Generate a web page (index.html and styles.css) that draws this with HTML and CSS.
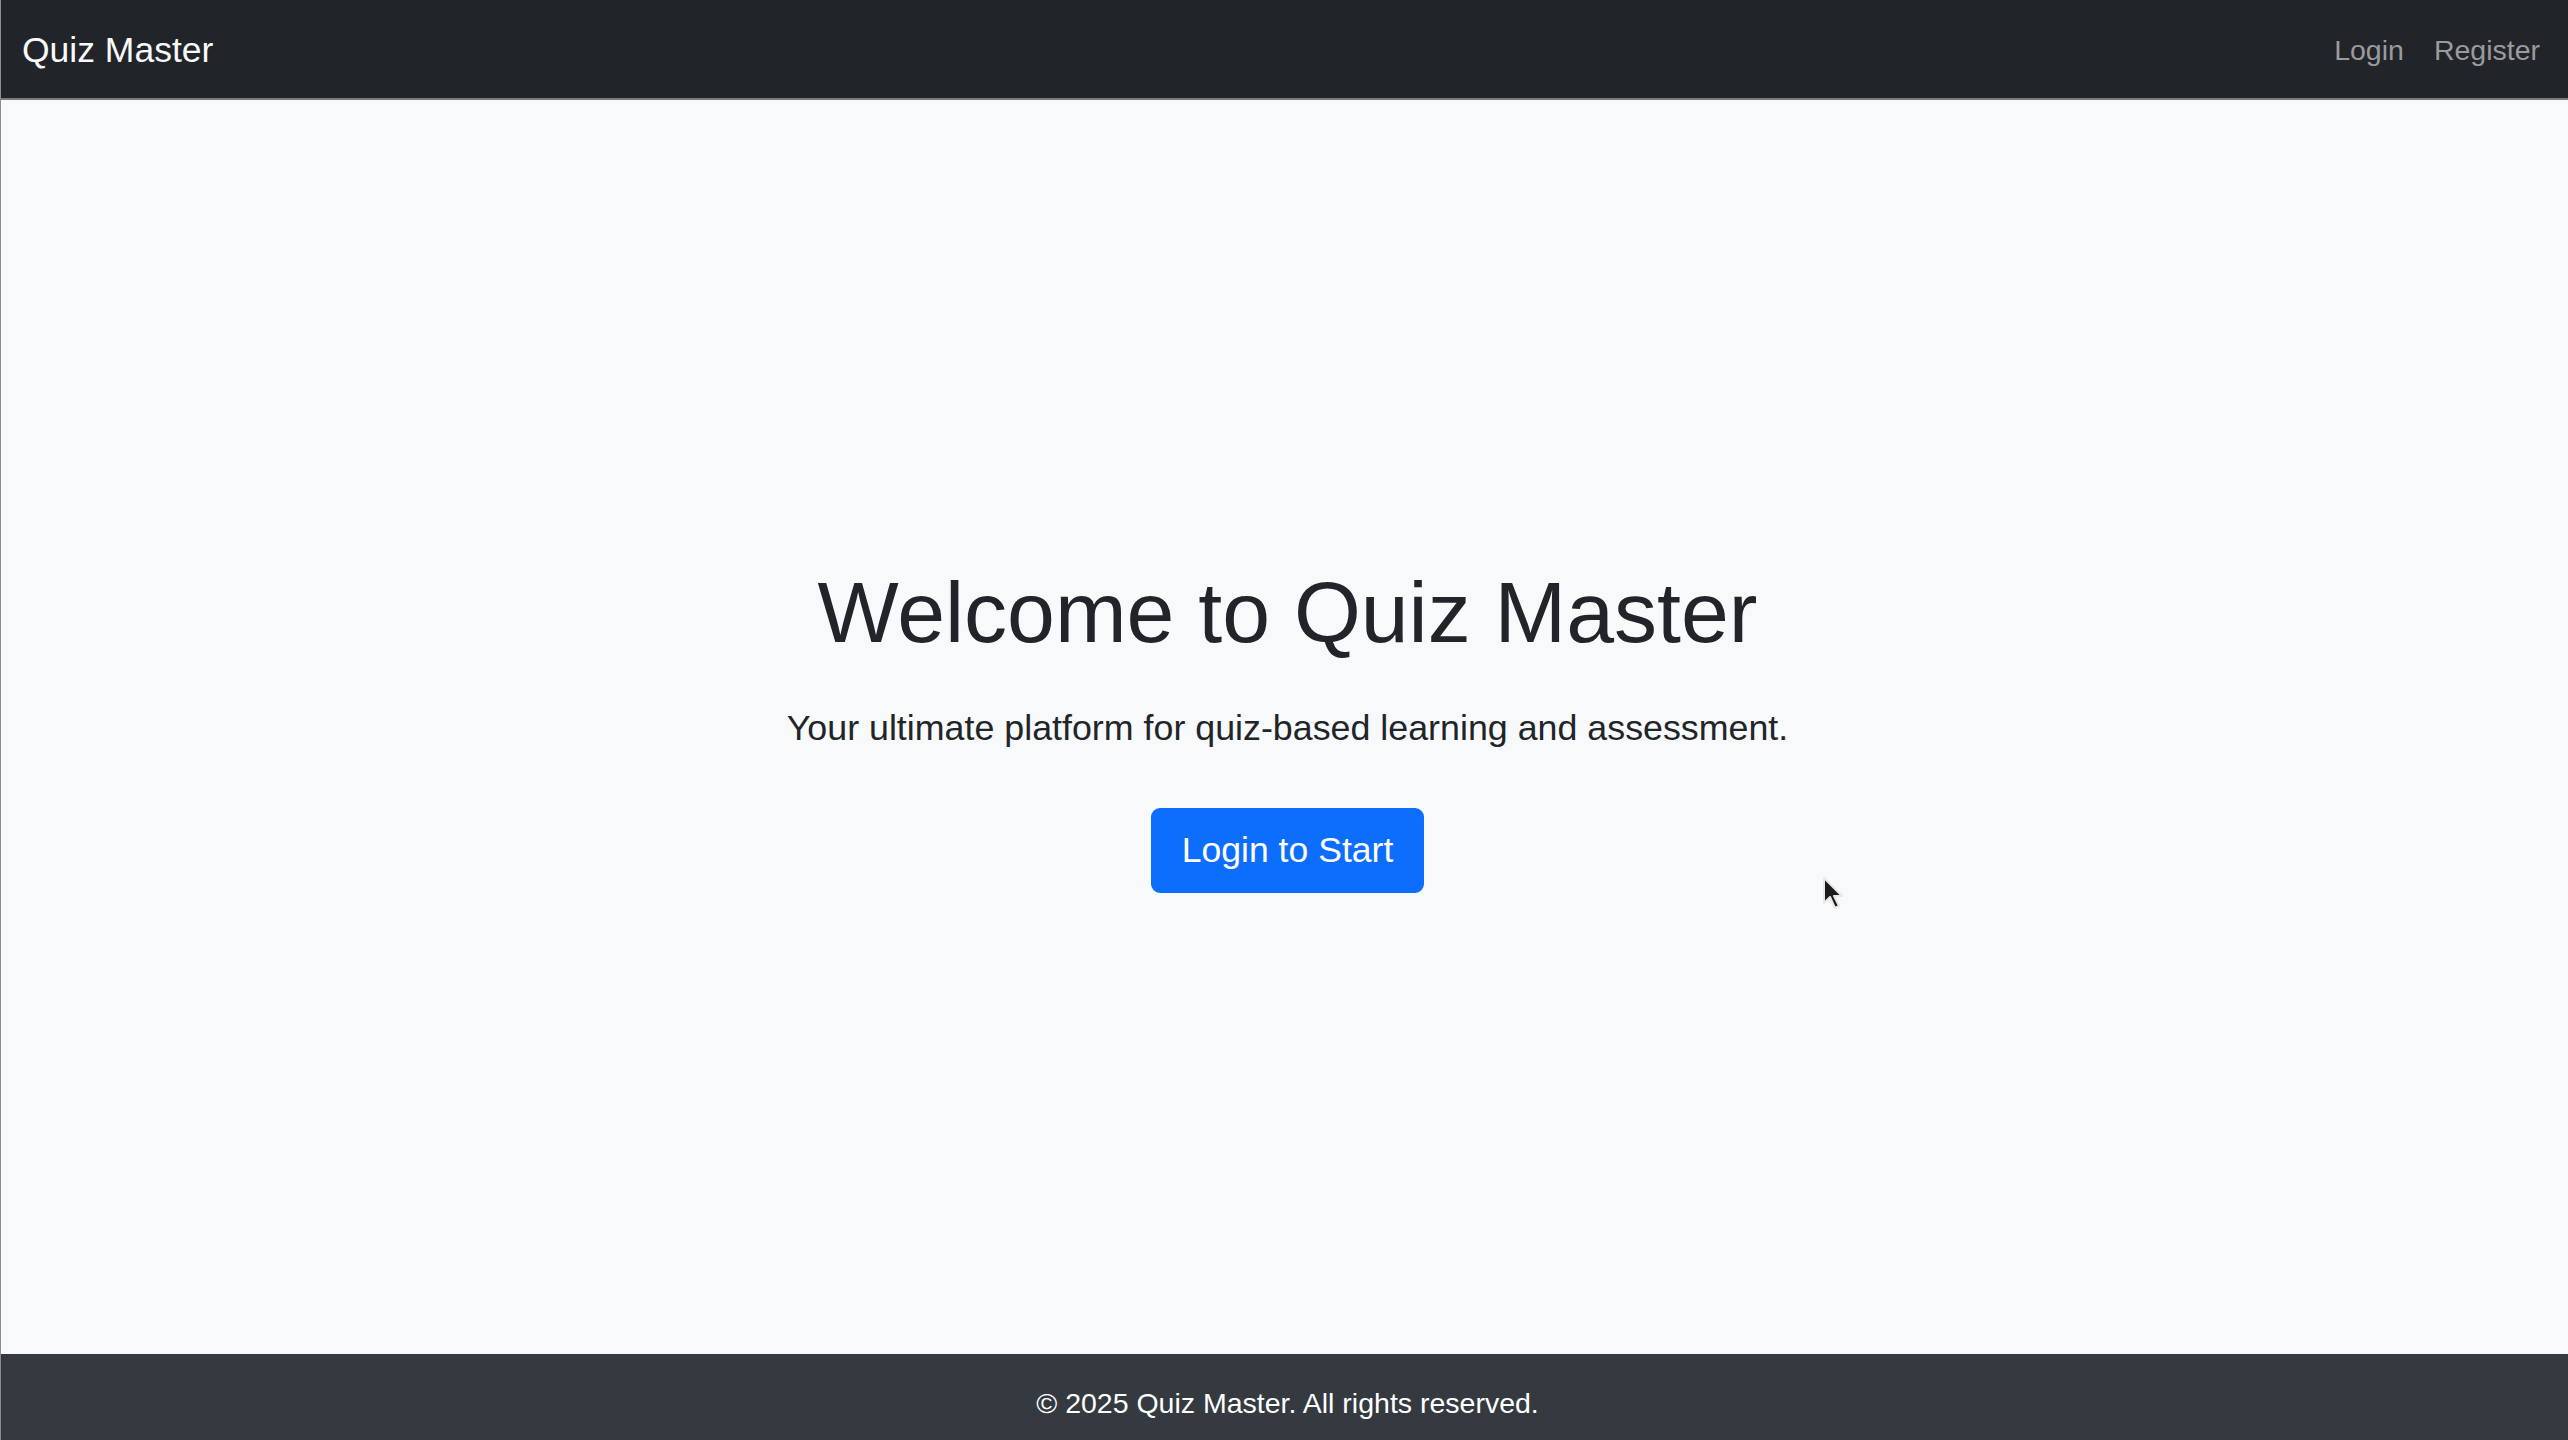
FILE: index.html
```html
<!DOCTYPE html>
<html lang="en">
<head>
<meta charset="utf-8">
<title>Quiz Master</title>
<link rel="stylesheet" href="styles.css">
</head>
<body>
<div class="page">
  <nav class="navbar">
    <a class="brand" href="#">Quiz Master</a>
    <div class="nav-links">
      <a class="nav-link" href="#">Login</a>
      <a class="nav-link" href="#">Register</a>
    </div>
  </nav>
  <main class="main">
    <div class="hero">
      <h1 class="hero-title">Welcome to Quiz Master</h1>
      <p class="hero-lead">Your ultimate platform for quiz-based learning and assessment.</p>
      <a class="btn-primary" href="#">Login to Start</a>
    </div>
  </main>
  <footer class="footer">
    <p class="footer-text">© 2025 Quiz Master. All rights reserved.</p>
  </footer>
  <svg class="cursor" width="22" height="34" viewBox="0 0 22 34">
    <path d="M2 2 L2 27 L8 21 L13 32 L17 30 L12 20 L20 20 Z" fill="#1b1b1b" stroke="#e8e8e8" stroke-width="2" stroke-linejoin="round"/>
  </svg>
</div>
</body>
</html>
```
FILE: styles.css
```css
* { box-sizing: border-box; }
html, body { margin: 0; padding: 0; }
body {
  font-family: "Liberation Sans", Arial, Helvetica, sans-serif;
  background: #f8f9fa;
  color: #212529;
}
.page {
  position: relative;
  display: flex;
  flex-direction: column;
  height: 1440px;
  border-left: 1px solid #8a8c90;
}
.navbar {
  height: 100px;
  background: #212529;
  border-bottom: 2px solid #7a7c80;
  display: flex;
  align-items: center;
  justify-content: space-between;
  padding: 3px 28px 0 21px;
}
.brand {
  color: #f8f9fa;
  text-decoration: none;
  font-size: 35.5px;
  line-height: 1;
}
.nav-links {
  display: flex;
  gap: 30px;
}
.nav-link {
  color: #9a9b9d;
  text-decoration: none;
  font-size: 28.5px;
  line-height: 1;
}
.main {
  flex: 1;
  display: flex;
  align-items: center;
  justify-content: center;
  padding-left: 6px;
}
.hero {
  display: flex;
  flex-direction: column;
  align-items: center;
  text-align: center;
}
.hero-title {
  margin: 0 0 38px;
  font-size: 86px;
  font-weight: 400;
  line-height: 1.2;
  color: #212529;
}
.hero-lead {
  margin: 0 0 52px;
  font-size: 35.8px;
  line-height: 1.5;
  color: #212529;
}
.btn-primary {
  display: inline-block;
  background: #0d6efd;
  color: #fff;
  text-decoration: none;
  font-size: 35.6px;
  line-height: 1.5;
  padding: 14px 28.5px;
  border: 2px solid #0d6efd;
  border-radius: 9px;
}
.footer {
  height: 86px;
  background: #343a40;
  display: flex;
  align-items: center;
  justify-content: center;
  padding-top: 12px;
  padding-left: 6px;
}
.footer-text {
  margin: 0;
  color: #fff;
  font-size: 28.5px;
  line-height: 1.5;
}
.cursor {
  position: absolute;
  left: 1821px;
  top: 876px;
}
```
